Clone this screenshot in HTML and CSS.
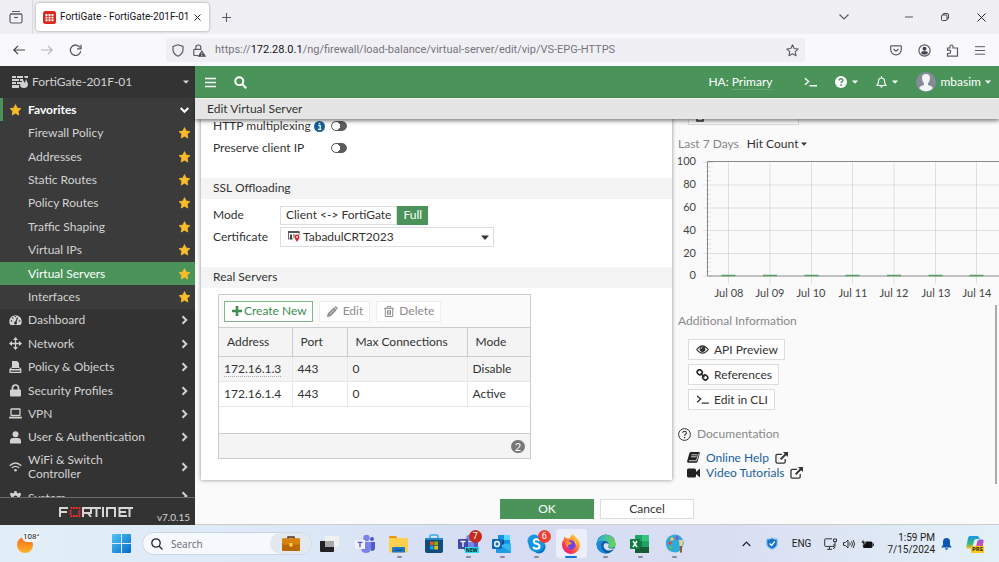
FILE: index.html
```html
<!DOCTYPE html>
<html lang="en">
<head>
<meta charset="utf-8">
<title>FortiGate - FortiGate-201F-01</title>
<link rel="stylesheet" href="styles.css">
</head>
<body>
<svg class="defs" aria-hidden="true">
  <symbol id="star" viewBox="0 0 24 24"><path d="M12 1.2l3.3 7 7.6 1-5.6 5.3 1.4 7.6-6.7-3.7-6.7 3.7 1.4-7.6L1.1 9.200l7.6-1z" fill="#f9bc2d" stroke="#f9bc2d" stroke-width="1.500" stroke-linejoin="round"/></symbol>
  <symbol id="right" viewBox="0 0 10 10"><path d="M3 1.200L6.800 5 3 8.800" fill="none" stroke="currentColor" stroke-width="2"/></symbol>
  <symbol id="down" viewBox="0 0 10 10"><path d="M1.200 3L5 6.800 8.800 3" fill="none" stroke="currentColor" stroke-width="2"/></symbol>
  <symbol id="caret" viewBox="0 0 10 6"><path d="M0 .5h10L5 6z" fill="currentColor"/></symbol>
  <symbol id="cli" viewBox="0 0 14 10"><path d="M1 1l4 3.500L1 8M6 9h8" fill="none" stroke="currentColor" stroke-width="1.500"/></symbol>
  <symbol id="external" viewBox="0 0 14 13"><path d="M7.500 2.500h-5q-1.500 0-1.500 1.500v6.500q0 1.500 1.500 1.500h7q1.500 0 1.500-1.500v-3" fill="none" stroke="currentColor" stroke-width="1.400"/><path d="M8.500 0H14v5.500l-2-2L6.800 8.700 5.300 7.200 10.500 2z" fill="currentColor"/></symbol>
  <symbol id="teams" viewBox="0 0 20 20"><circle cx="11.500" cy="4" r="3.200" fill="#7b83eb"/><circle cx="17" cy="5" r="2" fill="#5059c9"/><path d="M13 8h7v6q0 3-3.500 3z" fill="#5059c9"/><path d="M6 8h10v6q0 5-5 5t-5-5z" fill="#7b83eb"/></symbol>
</svg>

<header class="tabs">
  <button class="icon-btn recent" aria-label="Recent browsing"><svg width="14" height="14" viewBox="0 0 14 14" fill="none" stroke="#5b5b66" stroke-width="1.200"><path d="M3 1.500h8M1 4h12"/><rect x="1" y="4" width="12" height="9" rx="1.500"/><path d="M5 7.500h4"/></svg></button>
  <div class="tab">
    <svg width="13" height="13" viewBox="0 0 13 13"><rect width="13" height="13" rx="2.500" fill="#da291c"/><path d="M2.500 3h2v2h-2zM5.500 3h2v2h-2zM8.500 3h2v2h-2zM2.500 5.800h2v1.600h-2zM8.500 5.800h2v1.600h-2zM2.500 8.200h2v2h-2zM5.500 8.200h2v2h-2zM8.500 8.200h2v2h-2zM5.500 5.800h2v1.600h-2z" fill="#fff"/></svg>
    <span>FortiGate - FortiGate-201F-01</span>
    <button class="icon-btn" aria-label="Close tab"><svg width="7" height="7" viewBox="0 0 7 7"><path d="M.5.5l6 6M6.500.5l-6 6" stroke="#2b2a33"/></svg></button>
  </div>
  <button class="icon-btn newtab" aria-label="New tab"><svg width="9" height="9" viewBox="0 0 9 9"><path d="M4.500 0v9M0 4.500h9" stroke="#5b5b66" stroke-width="1.100"/></svg></button>
  <span class="grow"></span>
  <div class="window-controls">
    <button class="icon-btn" aria-label="List all tabs"><svg width="10" height="6" viewBox="0 0 10 6"><path d="M.5.5L5 5 9.500.5" fill="none" stroke="#5b5b66" stroke-width="1.200"/></svg></button>
    <button class="icon-btn" aria-label="Minimize"><svg width="8" height="8" viewBox="0 0 8 8"><path d="M0 4h8" stroke="#555"/></svg></button>
    <button class="icon-btn" aria-label="Restore"><svg width="8" height="8" viewBox="0 0 8 8" fill="none" stroke="#333" stroke-width=".9"><rect x=".5" y="2" width="5.500" height="5.500" rx="1"/><path d="M2 2V1.500q0-1 1-1h3q1.500 0 1.500 1.500v3q0 1-1 1H6"/></svg></button>
    <button class="icon-btn" aria-label="Close"><svg width="9" height="9" viewBox="0 0 9 9"><path d="M.5.5l8 8M8.500.5l-8 8" stroke="#222"/></svg></button>
  </div>
</header>

<div class="toolbar">
  <div class="nav-buttons">
    <button class="icon-btn" aria-label="Back"><svg width="12" height="10" viewBox="0 0 12 10" fill="none" stroke="#42414d" stroke-width="1.200"><path d="M12 5H1M5 .8L.8 5 5 9.200"/></svg></button>
    <button class="icon-btn" aria-label="Forward" disabled><svg width="12" height="10" viewBox="0 0 12 10" fill="none" stroke="#b5b5bc" stroke-width="1.200"><path d="M0 5h11M7 .8L11.200 5 7 9.200"/></svg></button>
    <button class="icon-btn" aria-label="Reload"><svg width="13" height="13" viewBox="0 0 13 13" fill="none" stroke="#5b5b66" stroke-width="1.300"><path d="M11 3.500A5.200 5.200 0 1 0 11.700 7M12 .8v4H8"/></svg></button>
  </div>
  <div class="urlbar">
    <svg width="12" height="13" viewBox="0 0 12 13" fill="none" stroke="#5b5b66" stroke-width="1.200"><path d="M6 .8l5 1.700v3q0 4.500-5 6.700-5-2.200-5-6.700v-3z"/></svg>
    <svg width="13" height="13" viewBox="0 0 13 13" fill="none" stroke="#5b5b66" stroke-width="1.200"><path d="M2.800 5V3.500a2.500 2.500 0 0 1 5 0V5M5 11.500H1.500q-.7 0-.7-.7V6q0-.7.7-.7h7"/><path d="M8.800 6L13 12.700H4.600z" fill="#4a4a55" stroke="none"/><path d="M8.800 8.500v2M8.800 11v1" stroke="#fff" stroke-width=".8"/></svg>
    <a class="url" href="#">https://<b>172.28.0.1</b>/ng/firewall/load-balance/virtual-server/edit/vip/VS-EPG-HTTPS</a>
    <button class="icon-btn" aria-label="Bookmark this page"><svg width="13" height="13" viewBox="0 0 13 13" fill="none" stroke="#5b5b66" stroke-width="1.100" stroke-linejoin="round"><path d="M6.500.8l1.700 3.700 4 .5-3 2.700.8 4-3.500-2-3.500 2 .8-4L.8 5l4-.5z"/></svg></button>
  </div>
  <div class="extensions">
    <button class="icon-btn" aria-label="Save to Pocket"><svg width="12" height="11" viewBox="0 0 12 11" fill="none" stroke="#5b5b66" stroke-width="1.200"><path d="M1.500.8h9q.8 0 .8.800v3a5.300 5.300 0 0 1-10.600 0v-3q0-.8.800-.8z"/><path d="M3.500 4L6 6.200 8.500 4"/></svg></button>
    <button class="icon-btn" aria-label="Account"><svg width="13" height="13" viewBox="0 0 13 13"><circle cx="6.500" cy="6.500" r="5.600" fill="none" stroke="#5b5b66" stroke-width="1.200"/><circle cx="6.500" cy="4.800" r="2" fill="#42414d"/><path d="M3 9q0-1.800 2-1.800h3q2 0 2 1.800-1.400 1.800-3.500 1.800T3 9z" fill="#42414d"/></svg></button>
    <button class="icon-btn" aria-label="Extensions"><svg width="13" height="13" viewBox="0 0 13 13" fill="none" stroke="#5b5b66" stroke-width="1.200"><path d="M1.500 6.200V4H4V2.500a1.500 1.500 0 0 1 3 0V4h4.500v8.200h-10V9.500H3a1.600 1.600 0 0 0 0-3.300z"/></svg></button>
    <button class="icon-btn" aria-label="Application menu"><svg width="10" height="9" viewBox="0 0 10 9"><path d="M0 .7h10M0 4.500h10M0 8.200h10" stroke="#5b5b66"/></svg></button>
  </div>
</div>

<div class="app">
  <aside class="sidebar">
    <button class="device">
      <svg width="16" height="12" viewBox="0 0 16 12" fill="#d2d2d2"><path d="M0 0h4v2H0zM5 0h6v2H5zM12 0h4v2h-3zM0 3h7v2H0zM8 3h3v2H8zM0 6h4v2H0zM5 6h5v2H5zM0 9h7v3H0zM8 9l3-5 2 3 1-4 2 5q0 4-4 4-4 0-4-3z"/></svg>
      <span>FortiGate-201F-01</span>
      <svg class="caret" width="6" height="4"><use href="#caret"/></svg>
    </button>
    <nav class="menu">
      <a class="item fav head" href="#"><svg class="lead" width="13" height="12"><use href="#star"/></svg><span>Favorites</span><svg width="10" height="10"><use href="#down"/></svg></a>
      <a class="item fav" href="#"><span>Firewall Policy</span><svg width="13" height="12"><use href="#star"/></svg></a>
      <a class="item fav" href="#"><span>Addresses</span><svg width="13" height="12"><use href="#star"/></svg></a>
      <a class="item fav" href="#"><span>Static Routes</span><svg width="13" height="12"><use href="#star"/></svg></a>
      <a class="item fav" href="#"><span>Policy Routes</span><svg width="13" height="12"><use href="#star"/></svg></a>
      <a class="item fav" href="#"><span>Traffic Shaping</span><svg width="13" height="12"><use href="#star"/></svg></a>
      <a class="item fav" href="#"><span>Virtual IPs</span><svg width="13" height="12"><use href="#star"/></svg></a>
      <a class="item fav active" href="#"><span>Virtual Servers</span><svg width="13" height="12"><use href="#star"/></svg></a>
      <a class="item fav" href="#"><span>Interfaces</span><svg width="13" height="12"><use href="#star"/></svg></a>
      <a class="item" href="#"><svg class="lead" width="13" height="12" viewBox="0 0 13 12"><path d="M1.500 11A6.200 6.200 0 1 1 11.500 11z" fill="#d2d2d2"/><path d="M6.500 9L8.500 3.500" stroke="#333" stroke-width="1.200"/><circle cx="6.500" cy="9" r="1.500" fill="#333"/><g fill="#333"><circle cx="2.500" cy="7" r=".8"/><circle cx="3.800" cy="4" r=".8"/><circle cx="6.300" cy="2.500" r=".7"/><circle cx="10.500" cy="7" r=".8"/></g></svg><span>Dashboard</span><svg width="10" height="10"><use href="#right"/></svg></a>
      <a class="item" href="#"><svg class="lead" width="13" height="13" viewBox="0 0 13 13"><path d="M6.500 1v11M1 6.500h11" stroke="#d2d2d2" stroke-width="1.300"/><path d="M6.500 0L9 3H4zM6.500 13L9 10H4zM0 6.500L3 4v5zM13 6.500L10 4v5z" fill="#d2d2d2"/></svg><span>Network</span><svg width="10" height="10"><use href="#right"/></svg></a>
      <a class="item" href="#"><svg class="lead" width="13" height="12" viewBox="0 0 13 12"><path d="M3 0h5l2 2v5H3z" fill="#d2d2d2"/><path d="M2.500 6.500L1 8.500V11.300h10.800V8.500L10.500 6.500" fill="none" stroke="#d2d2d2" stroke-width="1.200"/><path d="M1 8h11v1.500H1z" fill="#d2d2d2"/></svg><span>Policy &amp; Objects</span><svg width="10" height="10"><use href="#right"/></svg></a>
      <a class="item" href="#"><svg class="lead" width="13" height="13" viewBox="0 0 13 13"><path d="M3.500 6V4a3 3 0 0 1 6 0v2" fill="none" stroke="#d2d2d2" stroke-width="1.700"/><rect x="1" y="5.500" width="11" height="7" rx="1" fill="#d2d2d2"/></svg><span>Security Profiles</span><svg width="10" height="10"><use href="#right"/></svg></a>
      <a class="item" href="#"><svg class="lead" width="13" height="11" viewBox="0 0 13 11"><rect x="2" y="1" width="9" height="6.500" rx=".5" fill="none" stroke="#d2d2d2" stroke-width="1.300"/><path d="M0 8.800h13v.7q0 1-1 1H1q-1 0-1-1z" fill="#d2d2d2"/></svg><span>VPN</span><svg width="10" height="10"><use href="#right"/></svg></a>
      <a class="item" href="#"><svg class="lead" width="13" height="13" viewBox="0 0 13 13" fill="#d2d2d2"><circle cx="6.500" cy="3.300" r="3"/><path d="M1 12.500v-2.500q0-3 3-3h5q3 0 3 3v2.500z"/></svg><span>User &amp; Authentication</span><svg width="10" height="10"><use href="#right"/></svg></a>
      <a class="item tall" href="#"><svg class="lead" width="13" height="10" viewBox="0 0 13 10" fill="none" stroke="#d2d2d2" stroke-width="1.300"><path d="M.7 3.800q5.800-5.500 11.600 0M2.800 6q3.700-3.300 7.400 0"/><circle cx="6.500" cy="8.300" r="1.300" fill="#d2d2d2" stroke="none"/></svg><span>WiFi &amp; Switch<br>Controller</span><svg width="10" height="10"><use href="#right"/></svg></a>
      <a class="item cut" href="#"><svg class="lead" width="13" height="13" viewBox="0 0 13 13"><path d="M5.500 0h2l.4 1.800 1.200.6L11 1.500l1.200 2-1.300 1.800v2.400l1.300 1.500-1.200 2-3-1-.5 2.300h-2L5 10.300l-3 1-1.200-2L2.100 7.700V5.300L.8 3.500l1.200-2 1.900.9 1.200-.6z" fill="#d2d2d2"/><circle cx="6.500" cy="6.500" r="2" fill="#333"/></svg><span>System</span><svg width="10" height="10"><use href="#right"/></svg></a>
    </nav>
    <footer class="brand">
      <svg class="logo" width="74" height="10" viewBox="0 0 74 10" role="img" aria-label="Fortinet">
        <g fill="none" stroke="#d6d6d6" stroke-width="2"><path d="M1 10V1h8M1 5h7M24 10V1h8v5h-8M29 6l3 4M33 1h9M37.500 1v9M44 0v10M48 10V1h8v9M68 1h-7.500v8H68M61 5h6M66 1h8M70.500 1v9"/></g>
        <path d="M14 1h5M14 9h5M11.500 3v1.700M11.500 5.500V7.500M20.500 3v1.700M20.500 5.500V7.500M11.500 1h2M19.500 1h1.800M11.500 9h2M19.500 9h1.800" fill="none" stroke="#ee3124" stroke-width="2"/><path d="M14 0v2M16.500 0v2M19 0v2M14 8v2M16.500 8v2M19 8v2" stroke="#333" stroke-width=".5"/>
      </svg>
      <span>v7.0.15</span>
    </footer>
  </aside>

  <main class="main">
    <div class="topbar">
      <button class="icon-btn" aria-label="Toggle menu"><svg width="11" height="11" viewBox="0 0 11 11"><path d="M0 1.500h11M0 5.500h11M0 9.500h11" stroke="#fff" stroke-width="1.600"/></svg></button>
      <button class="icon-btn search" aria-label="Search"><svg width="13" height="13" viewBox="0 0 13 13" fill="none" stroke="#fff" stroke-width="2"><circle cx="5.300" cy="5.300" r="4"/><path d="M8.300 8.300l4 4"/></svg></button>
      <span class="grow"></span>
      <span class="ha">HA: <span class="dotted">Primary</span></span>
      <button class="icon-btn cli" aria-label="CLI console"><svg width="13" height="10"><use href="#cli"/></svg></button>
      <button class="icon-btn drop help" aria-label="Help"><svg width="12" height="12" viewBox="0 0 12 12"><circle cx="6" cy="6" r="6" fill="#fff"/><path d="M4.200 4.500q0-1.700 1.900-1.700t1.800 1.500q0 1-.9 1.400-.9.500-.9 1.300" fill="none" stroke="#4a9459" stroke-width="1.400"/><circle cx="6.100" cy="9" r=".9" fill="#4a9459"/></svg><svg width="6" height="4"><use href="#caret"/></svg></button>
      <button class="icon-btn drop bell" aria-label="Notifications"><svg width="11" height="12" viewBox="0 0 11 12" fill="none" stroke="#fff" stroke-width="1.100"><path d="M1 9.500q1.500-1.500 1.500-4.500 0-3 3-3t3 3q0 3 1.500 4.500zM5.500 0v2M4.300 10.500q1.200 1.300 2.400 0"/></svg><svg width="6" height="4"><use href="#caret"/></svg></button>
      <button class="user"><svg width="20" height="20" viewBox="0 0 20 20"><circle cx="10" cy="10" r="10" fill="#858c98"/><path d="M3 16q1.500-2.500 5-3V11.500Q6 9 6 6q0-4 4-4t4 4q0 3-2 5.500V13q3.500.5 5 3-3 3.300-7 3.300T3 16z" fill="#f4f5f7"/></svg><span>mbasim</span><svg width="6" height="4"><use href="#caret"/></svg></button>
    </div>
    <h1 class="title">Edit Virtual Server</h1>

    <div class="columns">
      <form class="panel">
        <div class="row"><label for="mux">HTTP multiplexing</label><svg class="info" width="11" height="11" viewBox="0 0 11 11"><circle cx="5.500" cy="5.500" r="5.500" fill="#155f9b"/><path d="M4.200 4.700h2v3.500M4 8.300h3.300" fill="none" stroke="#fff" stroke-width="1.200"/><circle cx="5.500" cy="2.600" r=".9" fill="#fff"/></svg><input class="toggle" id="mux" type="checkbox"></div>
        <div class="row"><label for="preserve">Preserve client IP</label><input class="toggle" id="preserve" type="checkbox"></div>

        <h2 class="section">SSL Offloading</h2>
        <div class="row field">
          <span class="name" id="mode-label">Mode</span>
          <div class="segments" role="radiogroup" aria-labelledby="mode-label">
            <label><input type="radio" name="mode"><span>Client &lt;-&gt; FortiGate</span></label>
            <label><input type="radio" name="mode" checked><span>Full</span></label>
          </div>
        </div>
        <div class="row field">
          <label class="name" for="cert">Certificate</label>
          <div class="select">
            <select id="cert"><option>TabadulCRT2023</option></select>
            <svg class="cert-icon" width="12" height="11" viewBox="0 0 12 11"><path d="M.5 8.500V1h10.500v3" fill="none" stroke="#666"/><path d="M0 0h11.500v2H0z" fill="#555"/><path d="M2 3.500h2V8H2zM1.500 7h3v1.500h-3zM5 3.500h2v1H5zM5 5.500h1.500v1H5z" fill="#444"/><path d="M9 11Q6.500 7.500 6.500 6a2.500 2.500 0 0 1 5 0q0 1.500-2.500 5z" fill="#e0262b"/><circle cx="9" cy="6" r=".9" fill="#fff"/></svg>
            <svg class="arrow" width="8" height="5"><use href="#caret"/></svg>
          </div>
        </div>

        <h2 class="section">Real Servers</h2>
        <div class="grid-box">
          <div class="grid-tools">
            <button type="button" class="btn create"><svg width="10" height="10" viewBox="0 0 10 10"><path d="M5 0v10M0 5h10" stroke="#3b8f4e" stroke-width="2.600"/></svg>Create New</button>
            <button type="button" class="btn off" disabled><svg width="11" height="11" viewBox="0 0 11 11" fill="#8c8c8c"><path d="M0 11l.7-3.500L7 1.200 9.800 4 3.500 10.300zM7.700.6q.7-.8 1.500 0l1.200 1.200q.8.700 0 1.500l-.2.200L7.500.8z"/><path d="M2.500 8.500L7.500 3.500" stroke="#fafafa" stroke-width=".6"/></svg>Edit</button>
            <button type="button" class="btn off" disabled><svg width="10" height="11" viewBox="0 0 10 11" fill="none" stroke="#8c8c8c"><path d="M0 2.300h10M3.200 2V.6h3.600V2M1.300 2.500v8h7.400v-8M3.500 4.200v4.700M5 4.200v4.700M6.500 4.200v4.700"/></svg>Delete</button>
          </div>
          <table>
            <colgroup><col class="c1"><col class="c2"><col class="c3"><col class="c4"></colgroup>
            <thead><tr><th>Address</th><th>Port</th><th>Max Connections</th><th>Mode</th></tr></thead>
            <tbody>
              <tr><td><span class="dotted">172.16.1.3</span></td><td>443</td><td>0</td><td>Disable</td></tr>
              <tr><td>172.16.1.4</td><td>443</td><td>0</td><td>Active</td></tr>
            </tbody>
          </table>
          <div class="grid-foot"><span>2</span></div>
        </div>
      </form>

      <section class="side">
        <button class="btn clipped" aria-label="Statistics"><svg width="8" height="6" viewBox="0 0 8 6"><path d="M1 0v5h6V0" fill="none" stroke="#333" stroke-width="1.500"/></svg></button>
        <div class="chart-head"><span>Last 7 Days</span><button class="hit">Hit Count<svg width="6" height="4"><use href="#caret"/></svg></button></div>
        <svg class="chart" height="147" role="img" aria-label="Hit count per day">
          <g stroke="#000" stroke-opacity=".1">
            <path d="M25 8.500h10M25 31h300M25 54h300M25 76.500h300M25 99.500h300M25 122h10"/>
            <path d="M50.500 8v122M92 8v122M133.500 8v122M174.500 8v122M216 8v122M257.500 8v122M298.500 8v122"/>
            <path d="M28 13h5M28 17.500h5M28 22h5M28 26.500h5M28 36h5M28 40.500h5M28 45h5M28 49.500h5M28 58.500h5M28 63h5M28 67.500h5M28 72h5M28 81h5M28 85.500h5M28 90h5M28 94.500h5M28 104h5M28 108.500h5M28 113h5M28 117.500h5"/>
          </g>
          <path d="M330 7.500H29.500v114.500H330" fill="none" stroke="#888"/>
          <path d="M43.500 121.500h14M85 121.500h14M126.500 121.500h14M167.500 121.500h14M209 121.500h14M250.500 121.500h14M291.500 121.500h14" stroke="#55a065" stroke-width="1.500"/>
          <g text-anchor="end"><text x="18" y="11">100</text><text x="18" y="34">80</text><text x="18" y="57">60</text><text x="18" y="80">40</text><text x="18" y="103">20</text><text x="18" y="125">0</text></g>
          <g text-anchor="middle"><text x="51" y="143">Jul 08</text><text x="92" y="143">Jul 09</text><text x="133" y="143">Jul 10</text><text x="175" y="143">Jul 11</text><text x="216" y="143">Jul 12</text><text x="258" y="143">Jul 13</text><text x="299" y="143">Jul 14</text></g>
        </svg>
        <h3>Additional Information</h3>
        <div class="actions">
          <button class="btn"><svg width="13" height="9" viewBox="0 0 13 9"><path d="M.7 4.500Q6.500-2.800 12.300 4.500 6.500 11.800.7 4.500z" fill="none" stroke="#333" stroke-width="1.200"/><circle cx="6.500" cy="4" r="2.900" fill="#333"/><path d="M5 3.800q0-1.500 1.500-1.500" fill="none" stroke="#fff" stroke-width=".7"/></svg>API Preview</button>
          <button class="btn"><svg width="13" height="12" viewBox="0 0 13 12" fill="none" stroke="#222" stroke-width="1.600"><rect x="1.500" y=".8" width="4.500" height="5" rx="2" transform="rotate(-45 3.700 3.300)"/><rect x="7" y="6" width="4.500" height="5" rx="2" transform="rotate(-45 9.200 8.500)"/><path d="M4.500 4.500l4 3.500"/></svg>References</button>
          <button class="btn"><svg width="13" height="9"><use href="#cli"/></svg>Edit in CLI</button>
        </div>
        <h3 class="docs"><svg width="13" height="13" viewBox="0 0 13 13"><circle cx="6.500" cy="6.500" r="5.900" fill="none" stroke="#333"/><path d="M4.700 5q0-1.800 1.900-1.800T8.400 4.700q0 1-.9 1.500-.9.500-.9 1.500" fill="none" stroke="#333" stroke-width="1.100"/><circle cx="6.600" cy="9.600" r=".8" fill="#333"/></svg>Documentation</h3>
        <div class="links">
          <a href="#"><svg width="13" height="11" viewBox="0 0 13 11"><path d="M4 0h8q1 0 .8 1l-2 8q-.3 1.700-1.500 1.700H1.500Q-.3 10.700.2 9L2.300 1.500Q2.800 0 4 0z" fill="#222"/><path d="M4.500 2.800h5.500M4 4.800h5.500M2 8.700h7.500l2-7" fill="none" stroke="#fafafa" stroke-width=".8"/></svg><span>Online Help</span><svg class="ext" width="13" height="12"><use href="#external"/></svg></a>
          <a href="#"><svg width="13" height="10" viewBox="0 0 13 10" fill="#222"><rect y=".5" width="9" height="9" rx="1.500"/><path d="M9 4l4-3.500v9L9 6z"/></svg><span>Video Tutorials</span><svg class="ext" width="13" height="12"><use href="#external"/></svg></a>
        </div>
        <div class="scrollbar"></div>
      </section>
    </div>

    <div class="submit"><button class="ok">OK</button><button class="cancel">Cancel</button></div>
  </main>
</div>

<footer class="taskbar">
  <button class="weather" aria-label="Weather"><svg width="18" height="20" viewBox="0 0 18 20"><defs><linearGradient id="sun" x2="0" y2="1"><stop stop-color="#fb6a1c"/><stop offset="1" stop-color="#fbb423"/></linearGradient></defs><circle cx="8" cy="11" r="8" fill="url(#sun)"/></svg><span>108°</span></button>
  <button class="icon-btn start" aria-label="Start"><svg width="19" height="19" viewBox="0 0 19 19"><defs><linearGradient id="win" x2="1" y2="1"><stop stop-color="#4cc8f5"/><stop offset="1" stop-color="#0668ca"/></linearGradient></defs><path d="M0 1q0-1 1-1h8v9H0zM10 0h8q1 0 1 1v8h-9zM0 10h9v9H1q-1 0-1-1zM10 10h9v8q0 1-1 1h-8z" fill="url(#win)"/></svg></button>
  <div class="find">
    <svg width="12" height="12" viewBox="0 0 12 12" fill="none" stroke="#222" stroke-width="1.300"><circle cx="5" cy="5" r="4.200"/><path d="M8 8l3.500 3.500"/></svg>
    <input type="search" placeholder="Search" aria-label="Search">
    <span class="case"><svg width="18" height="15" viewBox="0 0 18 15"><path d="M6 3V1h6v2" fill="none" stroke="#4d3213" stroke-width="1.400"/><rect y="2.500" width="18" height="12.500" rx="1" fill="#b96808"/><path d="M0 3.500q0-1 1-1h16q1 0 1 1v5H0z" fill="#d98210"/><rect x="7.500" y="7" width="3" height="3.500" fill="#ffd84a"/></svg></span>
  </div>
  <div class="apps">
    <button aria-label="Task view"><svg width="20" height="18" viewBox="0 0 20 18"><path d="M5 1h13q1 0 1 1v10H5z" fill="#f1f1f1"/><path d="M5 6h9v9H5z" fill="#a9a9a9"/><path d="M0 6h5v6h9v4q0 1-1 1H1q-1 0-1-1z" fill="#222"/></svg></button>
    <button aria-label="Teams"><svg width="20" height="20"><use href="#teams"/><rect y="6" width="10" height="9" fill="#f2f2fc"/><path d="M2.500 8.300h5M5 8.300v5" stroke="#5059c9" stroke-width="1.300"/></svg></button>
    <button class="run" aria-label="File Explorer"><svg width="20" height="18" viewBox="0 0 20 18"><path d="M0 2q0-1 1-1h6l2 2.500H0z" fill="#e39b12"/><rect y="3" width="19" height="14.500" rx="1" fill="#fcd04e"/><path d="M3 17.500v-4.500q0-1 1-1h11q1 0 1 1v4.500z" fill="#1f75c4"/><path d="M6 15h7" stroke="#0d4b8b"/></svg></button>
    <button aria-label="Microsoft Store"><svg width="20" height="20" viewBox="0 0 20 20"><path d="M6 5V2q0-1 1-1h6q1 0 1 1v3" fill="none" stroke="#38a9e5" stroke-width="1.500"/><rect x="1" y="4" width="18" height="15" rx="2" fill="#124c7c"/><path d="M1 4h18v2H1z" fill="#2389c7"/><path d="M6 7.500h3.700v3.700H6z" fill="#f25022"/><path d="M10.300 7.500H14v3.700h-3.700z" fill="#7fba00"/><path d="M6 11.800h3.700v3.700H6z" fill="#00a4ef"/><path d="M10.300 11.800H14v3.700h-3.700z" fill="#ffb900"/></svg></button>
    <button class="run" aria-label="Teams new"><svg width="20" height="20"><use href="#teams"/><rect y="5" width="10" height="10" rx="1" fill="#4149a8"/><path d="M2.500 7.500h5M5 7.500v5.500" stroke="#fff" stroke-width="1.300"/></svg><span class="new">NEW</span><span class="badge dark">7</span></button>
    <button class="run" aria-label="Outlook"><svg width="20" height="20" viewBox="0 0 20 20"><path d="M6 1h12v9H6z" fill="#1490df"/><path d="M12 1h6v5h-6z" fill="#50d9ff"/><path d="M6 6h6v5H6z" fill="#0a4f96"/><path d="M4 9l8 4 7-4v9q0 1-1 1H5q-1 0-1-1z" fill="#1b9de2"/><path d="M19 9v9L8 11z" fill="#35b8f1"/><rect y="5" width="10" height="10" rx="1" fill="#0f6cbd"/><ellipse cx="5" cy="10" rx="2.300" ry="2.500" fill="none" stroke="#fff" stroke-width="1.400"/></svg></button>
    <button class="run" aria-label="Skype"><svg width="20" height="20" viewBox="0 0 20 20"><circle cx="7" cy="7" r="6.500" fill="#1697e8"/><circle cx="12" cy="13" r="6.500" fill="#0871c9"/><circle cx="9.500" cy="10" r="8" fill="#1295e2"/><path d="M12.500 7Q11.500 5.200 9.500 5.200 6.800 5.200 6.800 7.300 6.800 9.300 9.500 9.800q3 .5 3 2.700 0 2.300-3 2.300-2.500 0-3.300-2" fill="none" stroke="#fff" stroke-width="2"/></svg><span class="badge">6</span></button>
    <button class="current" aria-label="Firefox"><svg width="20" height="20" viewBox="0 0 20 20"><defs><linearGradient id="ff" x1="1" x2=".2" y2="1"><stop stop-color="#fff04c"/><stop offset=".4" stop-color="#ff9a2e"/><stop offset=".75" stop-color="#ff3a50"/><stop offset="1" stop-color="#df1386"/></linearGradient></defs><path d="M12 0q1 2 3.500 4 3.500 3 3.500 7a9 9 0 0 1-18 0q0-4 2-6l.3-2.500L5.500 4.500q1.500-.5 3 0Q9.500 1.500 12 0z" fill="url(#ff)"/><circle cx="10" cy="11" r="4.700" fill="#7542e5"/><path d="M4 8q3-2 5 0l2 1q-1 2-3.500 1.800-2 2 1.500 3.200-4 0-5-6z" fill="#ff9328"/><path d="M13 6q3 2 2.500 6-.5-2-1.500-3z" fill="#ffd03b"/></svg></button>
    <button class="run" aria-label="Edge"><svg width="20" height="20" viewBox="0 0 20 20"><defs><linearGradient id="ed" x2="1"><stop stop-color="#2aa9e6"/><stop offset="1" stop-color="#6bd84b"/></linearGradient></defs><circle cx="10" cy="10" r="9.500" fill="#0c59a4"/><path d="M.6 9A9.500 9.500 0 0 1 19.500 10q0 4-4.500 4-3 0-2.700-2 .7-.7.500-2.200Q12 7 8.500 7 3.500 7 .6 9z" fill="url(#ed)"/><path d="M.5 10Q3 6 8 7q-3.500 2-2.500 6.500 1 4 5.500 5.900Q1 20 .5 10z" fill="#1988d8"/><path d="M9 9q-3 3 0 6t9 0l.7-.7q-1 .3-3.200.3-4-.1-3.200-2.600.7-.7.500-2.200z" fill="#d9e1f5"/></svg></button>
    <button class="run" aria-label="Excel"><svg width="20" height="20" viewBox="0 0 20 20"><rect x="5" y="1" width="14" height="18" rx="1" fill="#21a366"/><path d="M12 1h7v6h-7z" fill="#33c481"/><path d="M5 7h7v6H5z" fill="#107c41"/><path d="M5 13h14v6H5z" fill="#185c37"/><rect y="5" width="10" height="10" rx="1" fill="#107c41"/><path d="M3 7l4 6M7 7l-4 6" stroke="#fff" stroke-width="1.400"/></svg></button>
    <button class="run" aria-label="Paint"><svg width="20" height="20" viewBox="0 0 20 20"><path d="M1 11Q0 4 6 1.500 12-1 16 3q4 4 2 9-2 6-8 6.500Q2 18 1 11z" fill="#30a9df"/><circle cx="5" cy="9" r="1.700" fill="#e54736"/><circle cx="7" cy="5" r="1.700" fill="#ffc83d"/><circle cx="12" cy="4" r="1.700" fill="#8e4fc4"/><circle cx="6" cy="13.500" r="1.700" fill="#55c557"/><path d="M14 6h4l-.5 6h-3z" fill="#f0cf8c"/><path d="M15 12h2v6q-1 2-2 0z" fill="#9a5b2b"/></svg></button>
  </div>
  <span class="grow"></span>
  <div class="tray">
    <svg width="9" height="6" viewBox="0 0 9 6"><path d="M.7 5L4.500 1.200 8.300 5" fill="none" stroke="#222" stroke-width="1.200"/></svg>
    <svg width="12" height="13" viewBox="0 0 12 13"><path d="M6 0q2 1.500 6 1.500v5Q12 11 6 13 0 11 0 6.500v-5Q4 1.500 6 0z" fill="#9bc9ef"/><path d="M6 1.500q2 1.200 4.700 1.300v4Q10.700 10 6 11.700 1.300 10 1.300 6.800v-4Q4 2.700 6 1.500z" fill="#1673c9"/><path d="M3.500 6.500l2 2 3.300-4" fill="none" stroke="#fff" stroke-width="1.300"/></svg>
    <span class="lang">ENG</span>
    <svg width="13" height="12" viewBox="0 0 13 12" fill="none" stroke="#333"><path d="M8 .8H1.500q-.8 0-.8.800v6q0 .8.800.8H10V6M5.500 8.500v2.700M3 11.300h5"/><path d="M9.500 1h3v2.500h-3zM11 3.500v5q0 2-2 2" /></svg>
    <svg width="12" height="10" viewBox="0 0 12 10" fill="none" stroke="#333"><path d="M.5 3.500h2L5 1v8L2.500 6.500h-2zM6.700 3.500q1 1.500 0 3M8.500 2.200q2 2.800 0 5.600M10.200 1q2.700 4 0 8"/></svg>
    <svg width="13" height="10" viewBox="0 0 13 10"><rect x="2" y="2.500" width="9.500" height="6.500" rx="1.500" fill="#111"/><path d="M11.800 4.500h1v2.500h-1z" fill="#111"/><path d="M2.500 0L0 4h2L1 7.500 5 3H3z" fill="#111" stroke="#e3ebf7" stroke-width=".6"/></svg>
    <div class="clock"><span>1:59 PM</span><span>7/15/2024</span></div>
    <svg width="11" height="12" viewBox="0 0 11 12" fill="#0b56b3"><path d="M5.500 0Q9 0 9 4v3l1.800 2.500H.2L2 7V4q0-4 3.500-4zM4 10.300h3Q6.700 12 5.500 12T4 10.300z"/></svg>
    <span class="copilot"><svg width="18" height="18" viewBox="0 0 18 18"><defs><linearGradient id="c1" x2="0" y2="1"><stop stop-color="#1796ea"/><stop offset=".6" stop-color="#35b979"/><stop offset="1" stop-color="#f0c51f"/></linearGradient><linearGradient id="c2" x2="0" y2="1"><stop stop-color="#8b57e8"/><stop offset=".6" stop-color="#e7508d"/><stop offset="1" stop-color="#f8934b"/></linearGradient></defs><path d="M4 1h7q2 0 2.500 3h-3Q8.500 4 8 6l-1.500 6q-.5 1.500-2 1.500H2Q0 13.500.5 11L2 3q.5-2 2-2z" fill="url(#c1)"/><path d="M14 16.500H7q-2 0-2.500-3h3q2 0 2.500-2L11.500 6q.5-1.500 2-1.500H16q2 0 1.500 2.500L16 14.500q-.5 2-2 2z" fill="url(#c2)"/></svg><span>PRE</span></span>
  </div>
</footer>
</body>
</html>
```
FILE: styles.css
```css
* { box-sizing: border-box; }
body {
  margin: 0;
  height: 100vh;
  display: flex;
  flex-direction: column;
  overflow: hidden;
  background: #fafafa;
  color: #333;
  font: 12px/16px Lato, "Liberation Sans", sans-serif;
}
button, input, select { font: inherit; color: inherit; }
button { padding: 0; border: 0; background: none; white-space: nowrap; }
a { color: inherit; text-decoration: none; }
svg { display: block; flex: none; }
.defs { position: absolute; width: 0; height: 0; }
.grow { flex: 1; }
.icon-btn { display: flex; align-items: center; justify-content: center; }
.dotted { border-bottom: 1px dotted #aaa; }

/* Browser chrome */
.tabs {
  flex: none;
  height: 34px;
  display: flex;
  align-items: center;
  background: #f0f0f4;
  font: 10px/14px Roboto, "Noto Sans", sans-serif;
}
.recent { width: 33px; height: 34px; border-right: 1px solid #d9d9df; }
.tab {
  width: 173px;
  height: 28px;
  margin-left: 3px;
  padding: 0 7px;
  display: flex;
  align-items: center;
  gap: 4px;
  border-radius: 3px;
  background: #fff;
  box-shadow: 0 0 3px rgba(0, 0, 0, .4);
  color: #15141a;
}
.tab span { flex: 1; white-space: nowrap; }
.tab .icon-btn { width: 12px; height: 12px; }
.newtab { margin-left: 13px; }
.window-controls { display: flex; }
.window-controls .icon-btn { width: 36px; }
.window-controls .icon-btn:first-child { margin-right: 29px; }
.toolbar {
  flex: none;
  height: 32px;
  display: flex;
  align-items: center;
  background: #f9f9fb;
}
.nav-buttons { width: 166px; padding-left: 5px; display: flex; }
.nav-buttons .icon-btn { width: 28px; }
.urlbar {
  flex: 1;
  height: 24px;
  padding: 0 6px;
  display: flex;
  align-items: center;
  gap: 9px;
  border-radius: 3px;
  background: #f0f0f4;
}
.url { flex: 1; color: #75757d; font: 11px/16px Roboto, "Noto Sans", sans-serif; }
.url b { color: #15141a; font-weight: 400; }
.extensions { padding: 0 5px 0 77px; display: flex; }
.extensions .icon-btn { width: 28px; }

/* Application */
.app { flex: 1; min-height: 0; display: flex; }
.sidebar {
  width: 195px;
  display: flex;
  flex-direction: column;
  background: #333;
  color: #d2d2d2;
}
.device { height: 32px; padding: 0 6px 0 12px; display: flex; align-items: center; gap: 4px; }
.device span { flex: 1; text-align: left; }
.menu { flex: 1; min-height: 0; display: flex; flex-direction: column; overflow: hidden; }
.item { flex: 1; padding: 0 4px 0 28px; display: flex; align-items: center; position: relative; line-height: 14px; }
.item span { flex: 1; }
.item > svg:last-child { width: 13px; }
.lead { position: absolute; left: 9px; }
.fav { background: #3b3b3b; }
.head { border-left: 3px solid #4a9459; padding-left: 25px; color: #fff; font-weight: 700; }
.head .lead { left: 6px; }
.active { background: #4a9459; color: #fff; }
.tall { flex: none; height: 36px; }
.cut { flex: none; height: 12px; align-items: flex-start; padding-top: 6px; }
.brand { height: 28px; padding: 0 5px; display: flex; align-items: center; justify-content: flex-end; gap: 24px; border-top: 1px solid #6c6c6c; font-size: 10px; }
.brand span { padding-top: 10px; }

.main { flex: 1; min-width: 0; display: flex; flex-direction: column; border-bottom: 1px solid #ccc; }
.topbar {
  flex: none;
  height: 32px;
  padding: 0 8px 0 10px;
  display: flex;
  align-items: center;
  background: #4a9459;
  color: #fff;
}
.topbar .dotted { border-color: #79b184; }
.search { margin-left: 18px; }
.cli { margin-left: 32px; }
.drop { gap: 5px; }
.help { margin-left: 18px; }
.bell { margin-left: 18px; }
.user { margin-left: 18px; display: flex; align-items: center; gap: 4px; }
.title {
  flex: none;
  height: 21px;
  margin: 0;
  padding: 0 12px;
  position: relative;
  z-index: 1;
  border-top: 1px solid #f4f4f4;
  background: #e5e5e5;
  box-shadow: 0 2px 4px rgba(0, 0, 0, .5);
  font-size: 12px;
  font-weight: 400;
  line-height: 19px;
}
.columns { flex: 1; min-height: 0; display: grid; grid-template-columns: 471fr 327fr; padding-left: 6px; }
.panel { background: #fff; box-shadow: 0 0 4px rgba(0, 0, 0, .45); margin-top: -4px; }
.row { height: 22px; padding-left: 12px; display: flex; align-items: center; }
.row label { white-space: nowrap; }
.row > label { width: 118px; }
.row .info { margin-left: -17px; margin-right: 6px; }
.toggle {
  appearance: none;
  width: 16px;
  height: 10px;
  margin: 0;
  border-radius: 5px;
  background: radial-gradient(circle at 5px 5px, #fff 4px, #5c5c5c 4px);
  border: 1px solid #5c5c5c;
  background-origin: border-box;
}
.section { height: 21px; margin: 19px 0 5px; padding-left: 12px; background: #f4f4f4; font-size: 12px; font-weight: 400; line-height: 20px; }
.row > .name { width: 67px; }
.segments { display: flex; height: 19px; }
.segments input { position: absolute; opacity: 0; }
.segments span { height: 19px; padding: 0 5px; display: block; border: 1px solid #ddd; line-height: 16px; }
.segments input:checked + span { border-color: #4a9459; background: #4a9459; color: #fff; }
.select { position: relative; width: 214px; }
.select select { appearance: none; width: 100%; height: 20px; display: block; padding: 0 22px; border: 1px solid #ddd; border-radius: 0; background: #fff; }
.cert-icon { position: absolute; left: 8px; top: 4px; }
.arrow { position: absolute; right: 5px; top: 8px; }

.grid-box { width: 313px; height: 165px; margin: 6px 0 0 17px; display: flex; flex-direction: column; border: 1px solid #ccc; }
.grid-tools { height: 32px; padding: 0 5px; display: flex; align-items: center; gap: 6px; background: #fafafa; }
.btn { height: 21px; padding: 0 6px 0 7px; display: flex; align-items: center; gap: 5px; border: 1px solid #ddd; background: #fff; line-height: 18px; }
.create { gap: 2px; padding: 0 5px 0 7px; border-color: #7fb98b; color: #3b8f4e; }
.off { border-color: #eee; color: #8c8c8c; }
table { width: 100%; table-layout: fixed; border-collapse: collapse; }
.c1 { width: 73px; }
.c2 { width: 55px; }
.c3 { width: 120px; }
th, td { height: 25px; padding: 0 5px; border: solid #e8e8e8; border-width: 0 0 1px 1px; text-align: left; font-weight: 400; }
th { height: 29px; padding: 0 8px; border-color: #ccc; border-top-width: 1px; background: #f4f4f4; }
th:first-child, td:first-child { border-left: 0; }
tbody tr:first-child { background: #f4f4f4; }
.grid-foot { height: 25px; margin-top: auto; padding-right: 5px; display: flex; align-items: center; justify-content: flex-end; border-top: 1px solid #ccc; background: #f4f4f4; }
.grid-foot span { width: 14px; height: 13px; border-radius: 7px; background: #777; color: #fff; font-size: 11px; line-height: 13px; text-align: center; }

.side { position: relative; min-width: 0; padding-left: 6px; }
.clipped { width: 111px; height: 10px; margin: -4px 0 0 10px; align-items: flex-start; }
.chart-head { height: 29px; display: flex; align-items: center; gap: 8px; color: #888; padding-top: 8px; }
.hit { display: flex; align-items: center; gap: 3px; color: #333; }
.chart { width: 100%; overflow: hidden; }
.chart text { fill: #444; font-size: 11px; }
h3 { margin: 0; color: #888; font-size: 12px; font-weight: 400; line-height: 16px; }
.chart + h3 { margin-top: 12px; }
.actions { padding: 10px 0 0 10px; display: flex; flex-direction: column; align-items: flex-start; gap: 4px; }
.docs { margin-top: 16px; display: flex; align-items: center; gap: 6px; }
.links { padding: 8px 0 0 9px; line-height: 15px; }
.links a { display: flex; align-items: center; gap: 6px; }
.links span { color: #17609d; }
.scrollbar { position: absolute; right: 2px; top: 186px; bottom: -4px; width: 2px; background: #aaa; }
.submit { flex: none; height: 45px; padding-top: 14px; display: flex; align-items: center; justify-content: center; gap: 6px; }
.ok, .cancel { width: 94px; height: 20px; border: 1px solid #ddd; background: #fff; line-height: 18px; }
.ok { border-color: #4a9459; background: #4a9459; color: #fff; }

/* Desktop taskbar */
.taskbar {
  flex: none;
  height: 37px;
  padding-right: 15px;
  display: flex;
  align-items: center;
  background: linear-gradient(90deg, #e2eff8, #dce8f7 30%, #d5dcf3 50%, #d9def2 72%, #e3f0f8);
  font: 10px/12px Roboto, "Noto Sans", sans-serif;
  color: #222;
}
.weather { width: 45px; padding-left: 17px; position: relative; }
.weather span { position: absolute; left: 22px; top: -2px; padding: 0 1px; border-radius: 5px; background: #eef5fb; font-size: 8px; line-height: 10px; }
.start { margin-left: 67px; }
.find { width: 170px; height: 23px; margin-left: 11px; padding-left: 8px; display: flex; align-items: center; border: 1px solid #ccd7e6; border-radius: 12px; background: #f5f9fd; }
.find input { flex: 1; min-width: 0; padding: 0 8px; border: 0; outline: 0; background: none; font: 10px/14px "Open Sans", "Noto Sans", sans-serif; }
.find input::placeholder { color: #666; }
.case { width: 41px; height: 21px; display: flex; align-items: center; justify-content: center; border-radius: 11px; background: #e3e7ee; }
.apps { width: 379px; height: 37px; margin-left: 1px; display: flex; }
.apps button { flex: 1; display: flex; align-items: center; justify-content: center; position: relative; }
.run::after, .current::after { content: ""; position: absolute; bottom: 4px; width: 5px; height: 2px; border-radius: 1px; background: #858b98; }
.apps .current::after { width: 12px; background: #1173d4; }
.current::before { content: ""; position: absolute; inset: 4px 2px; border-radius: 3px; background: #eceff9; }
.current svg { position: relative; }
.badge { position: absolute; left: 18px; top: 5px; width: 13px; height: 13px; border-radius: 7px; background: #ee4035; color: #fff; font-size: 9px; line-height: 13px; }
.dark { background: #c42b1c; }
.new { position: absolute; left: 14px; top: 22px; padding: 0 1px; background: #20e0ee; color: #111; font: 700 5px/6px "Open Sans", sans-serif; }
.tray { display: flex; align-items: center; }
.tray > * { margin-left: 6px; }
.tray > svg:nth-child(2) { margin-left: 15px; }
.tray > .lang { margin-left: 14px; margin-right: 7px; }
.clock { display: flex; flex-direction: column; text-align: right; }
.tray > .clock { margin-left: 13px; }
.copilot { position: relative; }
.tray > .copilot { margin-left: 14px; }
.copilot span { position: absolute; left: 5px; top: 11px; padding: 0 1px; border-radius: 1px; background: #fbc718; color: #222; font: 700 6px/7px "Open Sans", sans-serif; }
```
